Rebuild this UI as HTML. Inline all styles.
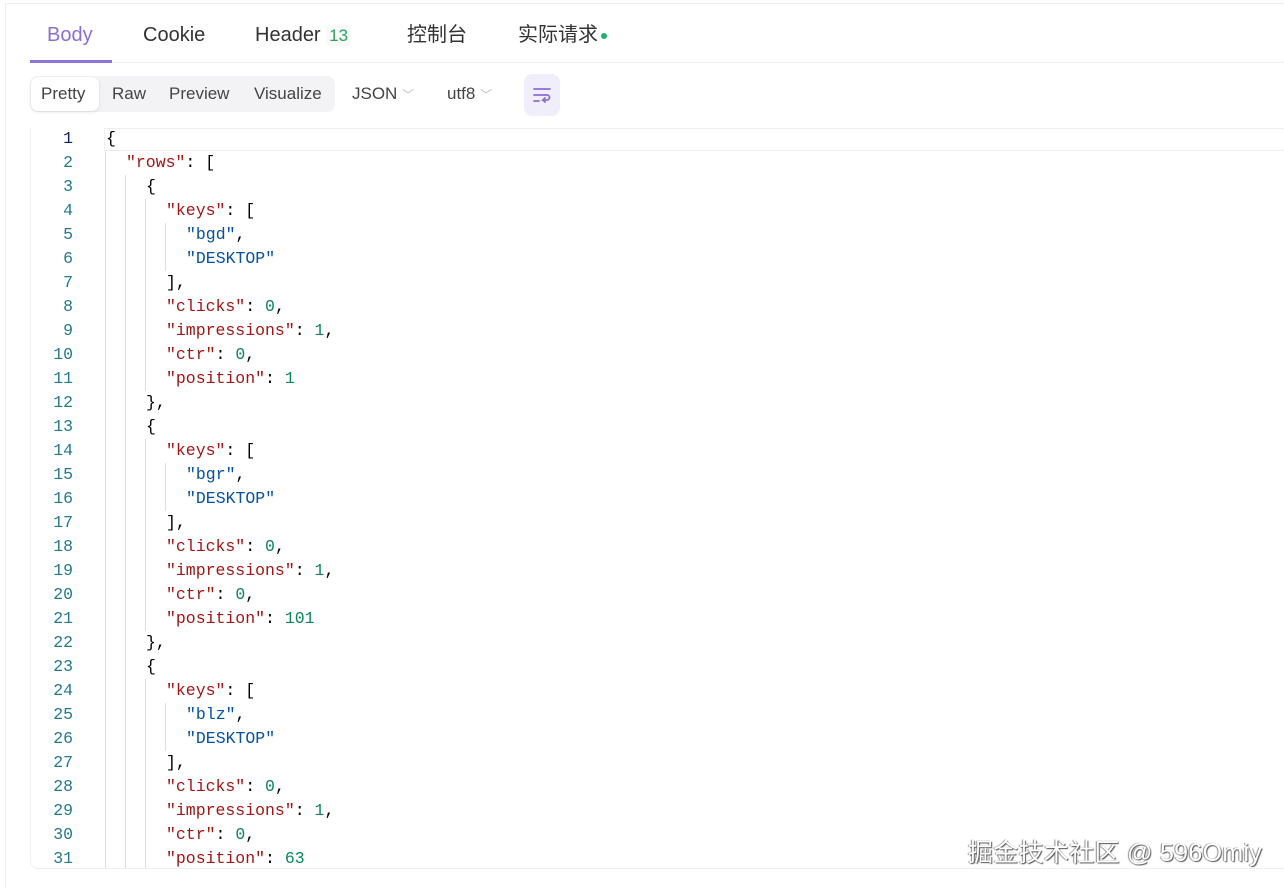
<!DOCTYPE html>
<html><head><meta charset="utf-8"><style>
body{margin:0;width:1284px;height:888px;background:#fff;overflow:hidden;font-family:"Liberation Sans","Noto Sans CJK SC",sans-serif;position:relative}
.frame{position:absolute;left:5px;top:3px;right:0;bottom:0;border-top:1px solid #eee;border-left:1px solid #eee}
.tab{position:absolute;top:22px;height:26px;line-height:26px;font-size:20px;color:#333;white-space:nowrap}
.uline{position:absolute;left:30px;top:60px;width:82px;height:3px;background:#8c75d6}
.sep{position:absolute;left:30px;right:0;top:62px;height:1px;background:#eee}
.seg{position:absolute;left:30px;top:76px;width:305px;height:36px;background:#f3f3f5;border-radius:8px}
.tb{position:absolute;top:84px;font-size:17px;color:#444}
.pretty{position:absolute;left:31px;top:77px;width:68px;height:34px;background:#fff;border-radius:7px;box-shadow:0 1px 3px rgba(0,0,0,.12)}
.code{position:absolute;left:30px;top:128px;right:0;height:740px;overflow:hidden;border-left:1px solid #f0f0f0;border-bottom:1px solid #eee;border-radius:0 0 0 8px}
.ln{position:absolute;left:0;width:42px;text-align:right;font:16.5px "Liberation Mono","DejaVu Sans Mono",monospace;color:#237893;line-height:24px}
.cl{position:absolute;left:75px;font:16.5px "Liberation Mono","DejaVu Sans Mono",monospace;line-height:24px;white-space:pre;color:#000}
.k{color:#a31515}.s{color:#0451a5}.n{color:#098658}
.g{position:absolute;width:1px;background:#ddd}
</style></head><body>
<div class="frame"></div>
<div class="tab" style="left:47px;color:#8c6fd6">Body</div>
<div class="tab" style="left:143px">Cookie</div>
<div class="tab" style="left:255px">Header <span style="font-size:17px;color:#2da160;padding:1px 3px;border-radius:4px;background:#f7faf8">13</span></div>
<div class="tab" style="left:407px">控制台</div>
<div class="tab" style="left:518px">实际请求<span style="display:inline-block;width:6px;height:6px;border-radius:3px;background:#1bb46a;vertical-align:middle;margin-left:3px"></span></div>
<div class="sep"></div><div class="uline"></div>
<div class="seg"></div><div class="pretty"></div>
<div class="tb" style="left:41px">Pretty</div>
<div class="tb" style="left:112px">Raw</div>
<div class="tb" style="left:169px">Preview</div>
<div class="tb" style="left:254px">Visualize</div>
<div class="tb" style="left:352px">JSON <span style="color:#bbb;font-size:12px">﹀</span></div>
<div class="tb" style="left:447px">utf8 <span style="color:#bbb;font-size:12px">﹀</span></div>
<div style="position:absolute;left:524px;top:74px;width:36px;height:42px;background:#f1eefc;border-radius:8px"></div>
<svg style="position:absolute;left:532px;top:86px" width="20" height="18" viewBox="0 0 20 18" fill="none" stroke="#8c6fd6" stroke-width="1.8" stroke-linecap="round"><path d="M2 3h16M2 9h13a2.5 2.5 0 0 1 0 5h-4l2-2m-2 2l2 2M2 15h5"/></svg>
<div class="code" id="c"><div style="position:absolute;left:73px;right:0;top:0;height:21px;border:1px solid #eee;border-right:none;"></div></div>
<div style="position:absolute;left:968px;top:833px;font-size:25px;letter-spacing:0.3px;color:#fff;text-shadow:1px 1px 1px #555,-1px 0 1px #888;font-family:'Liberation Sans','Noto Sans CJK SC',sans-serif">掘金技术社区 @ 596Omiy</div>
<script>
var L=[[0,'{'],[1,'<span class=k>"rows"</span>: ['],[2,'{']];
var items=[['bgd','1'],['bgr','101'],['blz','63']];
items.forEach(function(it,i){
L.push([3,'<span class=k>"keys"</span>: [']);
L.push([4,'<span class=s>"'+it[0]+'"</span>,']);
L.push([4,'<span class=s>"DESKTOP"</span>']);
L.push([3,'],']);
L.push([3,'<span class=k>"clicks"</span>: <span class=n>0</span>,']);
L.push([3,'<span class=k>"impressions"</span>: <span class=n>1</span>,']);
L.push([3,'<span class=k>"ctr"</span>: <span class=n>0</span>,']);
L.push([3,'<span class=k>"position"</span>: <span class=n>'+it[1]+'</span>']);
if(i<2){L.push([2,'},']);L.push([2,'{']);}
});
var c=document.getElementById('c'),h='';
L.forEach(function(l,i){var y=i*24-1;
h+='<div class="ln" style="top:'+y+'px;'+(i==0?'color:#0b216f':'')+'">'+(i+1)+'</div>';
h+='<div class="cl" style="top:'+y+'px;left:'+(75+l[0]*20)+'px">'+l[1]+'</div>';
for(var d=1;d<l[0];d++){h+='<div class="g" style="left:'+(75+d*20-1)+'px;top:'+y+'px;height:24px"></div>';}
if(i>0&&l[0]>=1)h+='<div class="g" style="left:74px;top:'+y+'px;height:24px"></div>';
});
c.innerHTML+=h;
</script>
</body></html>
